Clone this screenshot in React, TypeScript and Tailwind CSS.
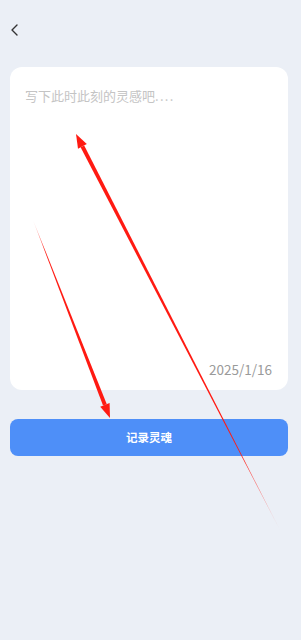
import React from 'react'

const font = { fontFamily: '"Noto Sans CJK SC", "Noto Sans", sans-serif' }

function Arrows() {
  return (
    <svg className="absolute inset-0 pointer-events-none" width={301} height={640} viewBox="0 0 301 640">
      <defs>
        <linearGradient id="fade1" x1="76" y1="134" x2="281" y2="532" gradientUnits="userSpaceOnUse">
          <stop offset="0" stopColor="#ff1a12" />
          <stop offset="0.8" stopColor="#ff1a12" />
          <stop offset="1" stopColor="#ff1a12" stopOpacity="0.1" />
        </linearGradient>
        <linearGradient id="fade2" x1="110" y1="418" x2="33" y2="220" gradientUnits="userSpaceOnUse">
          <stop offset="0" stopColor="#ff1a12" />
          <stop offset="0.85" stopColor="#ff1a12" />
          <stop offset="1" stopColor="#ff1a12" stopOpacity="0.1" />
        </linearGradient>
      </defs>
      {/* long arrow pointing up to the placeholder */}
      <polygon points="84.2,145.5 80.6,147.3 281,532" fill="url(#fade1)" />
      <polygon points="76,134 86.8,144.1 78,148.7" fill="#ff1a12" />
      {/* short arrow pointing down to the button */}
      <polygon points="106.8,404.2 103,405.6 33,220" fill="url(#fade2)" />
      <polygon points="110,418 109.6,403.1 100.2,406.7" fill="#ff1a12" />
    </svg>
  )
}

export default function App() {
  return (
    <div className="relative w-[301px] h-[640px] overflow-hidden bg-[#ebeff6]" style={font}>
      <div className="h-[60px] flex items-center pl-[10px]">
        <svg width="10" height="14" viewBox="0 0 10 14" fill="none">
          <path d="M7 2 L2 7 L7 12" stroke="#333" strokeWidth="1.4" strokeLinecap="round" strokeLinejoin="round" />
        </svg>
      </div>

      <div className="pl-[10px] pr-[13px] mt-[7px]">
        <div className="h-[323px] bg-white rounded-xl flex flex-col justify-between px-[15px] pt-[19px] pb-[11px]">
          <p className="text-[13px] leading-5 text-[#c4c4c4]">
            写下此时此刻的灵感吧
            <span className="tracking-[1.3px]">....</span>
          </p>
          <p className="text-right text-[13.5px] leading-5 text-[#9a9a9a] pr-[1px]">2025/1/16</p>
        </div>

        <button className="mt-[29px] w-full h-[37px] rounded-lg bg-[#4e8ff8] text-white text-[11.5px] font-bold flex items-center justify-center">
          记录灵魂
        </button>
      </div>

      <Arrows />
    </div>
  )
}
